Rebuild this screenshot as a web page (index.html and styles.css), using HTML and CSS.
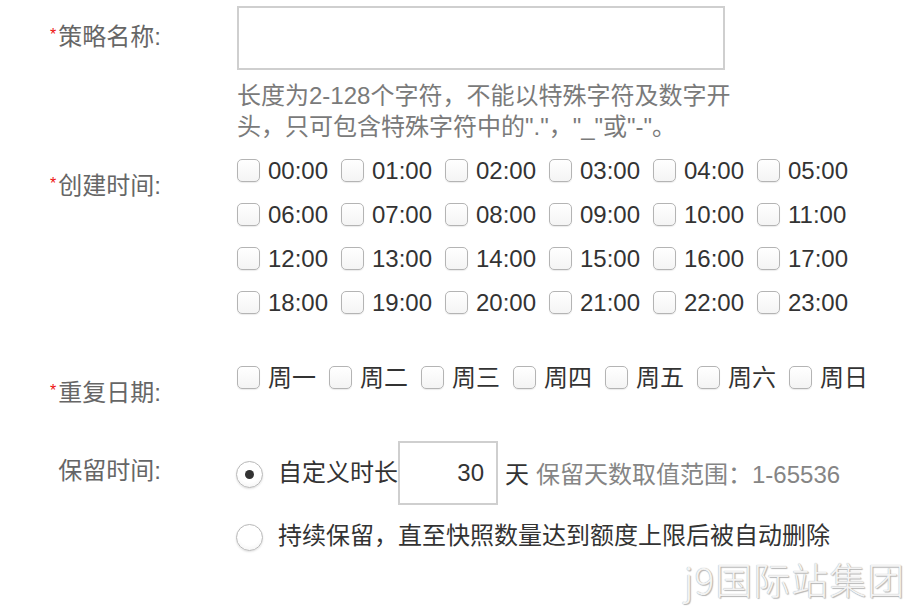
FILE: index.html
```html
<!DOCTYPE html>
<html lang="zh-CN">
<head>
<meta charset="utf-8">
<title>策略</title>
<link rel="stylesheet" href="styles.css">
</head>
<body>
<div class="form">
  <div class="row row-name">
    <div class="label label-name"><span class="req">*</span>策略名称:</div>
    <div class="control">
      <input class="text-input name-input" type="text">
      <p class="hint">长度为2-128个字符，不能以特殊字符及数字开<br>头，只可包含特殊字符中的"."，"_"或"-"。</p>
    </div>
  </div>

  <div class="row row-time">
    <div class="label label-offset"><span class="req">*</span>创建时间:</div>
    <div class="control time-grid">
      <label class="check"><input type="checkbox"><span>00:00</span></label>
      <label class="check"><input type="checkbox"><span>01:00</span></label>
      <label class="check"><input type="checkbox"><span>02:00</span></label>
      <label class="check"><input type="checkbox"><span>03:00</span></label>
      <label class="check"><input type="checkbox"><span>04:00</span></label>
      <label class="check"><input type="checkbox"><span>05:00</span></label>
      <label class="check"><input type="checkbox"><span>06:00</span></label>
      <label class="check"><input type="checkbox"><span>07:00</span></label>
      <label class="check"><input type="checkbox"><span>08:00</span></label>
      <label class="check"><input type="checkbox"><span>09:00</span></label>
      <label class="check"><input type="checkbox"><span>10:00</span></label>
      <label class="check"><input type="checkbox"><span>11:00</span></label>
      <label class="check"><input type="checkbox"><span>12:00</span></label>
      <label class="check"><input type="checkbox"><span>13:00</span></label>
      <label class="check"><input type="checkbox"><span>14:00</span></label>
      <label class="check"><input type="checkbox"><span>15:00</span></label>
      <label class="check"><input type="checkbox"><span>16:00</span></label>
      <label class="check"><input type="checkbox"><span>17:00</span></label>
      <label class="check"><input type="checkbox"><span>18:00</span></label>
      <label class="check"><input type="checkbox"><span>19:00</span></label>
      <label class="check"><input type="checkbox"><span>20:00</span></label>
      <label class="check"><input type="checkbox"><span>21:00</span></label>
      <label class="check"><input type="checkbox"><span>22:00</span></label>
      <label class="check"><input type="checkbox"><span>23:00</span></label>
    </div>
  </div>

  <div class="row row-week">
    <div class="label label-offset"><span class="req">*</span>重复日期:</div>
    <div class="control week-list">
      <label class="check"><input type="checkbox"><span>周一</span></label>
      <label class="check"><input type="checkbox"><span>周二</span></label>
      <label class="check"><input type="checkbox"><span>周三</span></label>
      <label class="check"><input type="checkbox"><span>周四</span></label>
      <label class="check"><input type="checkbox"><span>周五</span></label>
      <label class="check"><input type="checkbox"><span>周六</span></label>
      <label class="check"><input type="checkbox"><span>周日</span></label>
    </div>
  </div>

  <div class="row row-keep">
    <div class="label label-keep">保留时间:</div>
    <div class="control">
      <div class="radio-line radio-first">
        <label class="radio"><input type="radio" name="keep" checked><span>自定义时长</span></label>
        <input class="text-input days-input" type="text" value="30">
        <span class="unit">天</span>
        <span class="range">保留天数取值范围：1-65536</span>
      </div>
      <div class="radio-line radio-second">
        <label class="radio"><input type="radio" name="keep"><span>持续保留，直至快照数量达到额度上限后被自动删除</span></label>
      </div>
    </div>
  </div>
</div>
<div class="watermark">j9国际站集团</div>
</body>
</html>
```

FILE: styles.css
```css
html, body {
  margin: 0;
  padding: 0;
  background: #ffffff;
}

body {
  font-family: "Liberation Sans", "Noto Sans CJK SC", sans-serif;
  font-size: 24px;
  color: #333333;
  width: 920px;
  height: 612px;
  position: relative;
  overflow: hidden;
}

.form {
  display: flex;
  flex-direction: column;
}

.row {
  display: flex;
  align-items: flex-start;
}

.label {
  width: 161px;
  flex: none;
  text-align: right;
  color: #666666;
  line-height: 31px;
  white-space: nowrap;
}

.req {
  color: #ee1111;
  font-size: 16px;
  vertical-align: 5px;
  margin-right: 2px;
}

.control {
  margin-left: 76px;
}

/* row 1 */
.row-name {
  padding-top: 6px;
}

.label-name {
  line-height: 57px;
}

.text-input {
  box-sizing: border-box;
  border: 2px solid #cfcfcf;
  background: #ffffff;
  outline: none;
  font-family: inherit;
  font-size: 24px;
  color: #333333;
  margin: 0;
}

.name-input {
  display: block;
  width: 488px;
  height: 64px;
}

.hint {
  margin: 10px 0 0 0;
  color: #7a7a7a;
  line-height: 31px;
  white-space: nowrap;
}

/* checkbox */
.check {
  display: flex;
  align-items: center;
  white-space: nowrap;
}

.check input {
  -webkit-appearance: none;
  appearance: none;
  box-sizing: border-box;
  width: 23px;
  height: 23px;
  margin: 0 8px 0 0;
  border: 1px solid #b4b4b4;
  border-radius: 5px;
  background: linear-gradient(#ffffff, #f4f4f4);
  box-shadow: 0 1px 1px rgba(0, 0, 0, 0.08);
  flex: none;
}

.check span {
  color: #333333;
  line-height: 31px;
}

/* time grid */
.row-time {
  margin-top: 6px;
}

.label-offset {
  padding-top: 20px;
}

.time-grid {
  display: grid;
  grid-template-columns: repeat(6, 104px);
  grid-auto-rows: 44px;
  align-items: center;
}

/* week */
.row-week {
  margin-top: 31px;
}

.week-list {
  display: flex;
  gap: 13px;
  height: 44px;
  align-items: center;
}

/* retention */
.row-keep {
  margin-top: 33px;
}

.label-keep {
  padding-top: 14px;
}

.control .radio-line {
  display: flex;
  align-items: center;
  white-space: nowrap;
}

.radio-first {
  height: 63px;
  margin-left: -1px;
}

.radio-second {
  height: 44px;
  margin-top: 9px;
  margin-left: -1px;
}

.radio {
  display: flex;
  align-items: center;
}

.radio input {
  -webkit-appearance: none;
  appearance: none;
  box-sizing: border-box;
  width: 27px;
  height: 27px;
  margin: 4px 15px 0 0;
  border: 1px solid #b8b8b8;
  border-radius: 50%;
  background: radial-gradient(circle at 50% 35%, #ffffff 55%, #eeeeee 100%);
  box-shadow: 0 1px 2px rgba(0, 0, 0, 0.12);
  flex: none;
  display: grid;
  place-items: center;
}

.radio input:checked::after {
  content: "";
  width: 9px;
  height: 9px;
  border-radius: 50%;
  background: #333333;
}

.radio span {
  color: #333333;
  line-height: 31px;
}

.days-input {
  width: 100px;
  height: 64px;
  text-align: right;
  padding: 0 12px 0 0;
}

.unit {
  margin-left: 7px;
  color: #333333;
}

.range {
  margin-left: 7px;
  color: #858585;
}

/* watermark overlay */
.watermark {
  position: absolute;
  left: 684px;
  top: 555px;
  font-family: "Noto Sans CJK SC", sans-serif;
  font-weight: 300;
  font-size: 37px;
  letter-spacing: 1px;
  line-height: 48px;
  color: #f3f3f3;
  text-shadow: 0 0 1px #a0a0a0, 1px 1px 1px #b8b8b8;
  white-space: nowrap;
}
```
